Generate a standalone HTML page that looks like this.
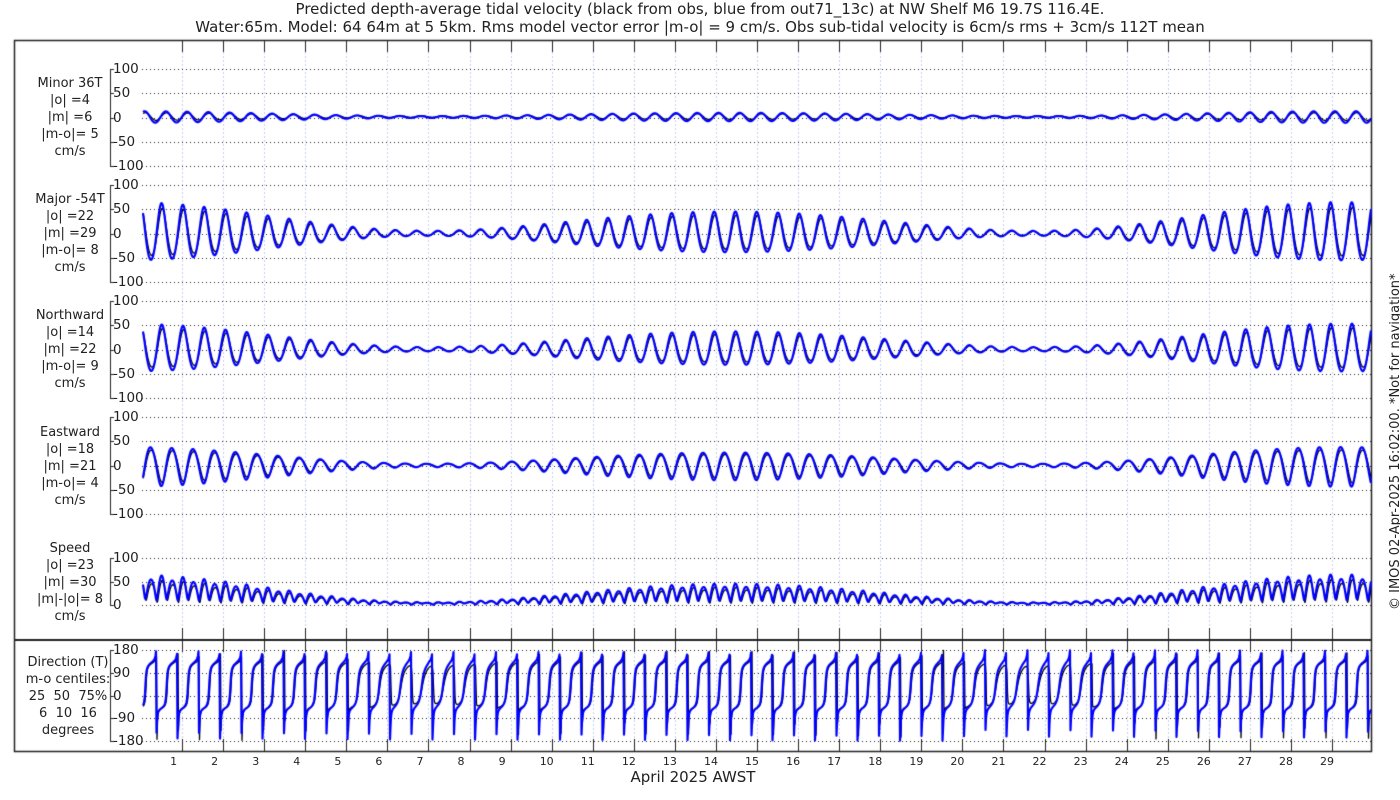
<!DOCTYPE html>
<html><head><meta charset="utf-8"><style>
html,body{margin:0;padding:0;background:#fff;width:1400px;height:800px;overflow:hidden}
#c{position:absolute;left:0;top:0}
.t{position:absolute;font-family:"DejaVu Sans","Liberation Sans",sans-serif;color:#222;white-space:nowrap}
.title{left:0;width:1400px;text-align:center;font-size:15px;line-height:18px}
.lab{width:140px;left:0;text-align:center;font-size:13px;line-height:17px}
.yl{font-size:13.5px;left:113px}
.dl{font-size:11px;top:755px}
</style></head><body>
<canvas id="c" width="1400" height="800"></canvas>
<div class="t title" style="top:0">Predicted depth-average tidal velocity (black from obs, blue from out71_13c) at NW Shelf M6 19.7S 116.4E.</div>
<div class="t title" style="top:18px">Water:65m. Model: 64 64m at 5 5km. Rms model vector error |m-o| = 9 cm/s. Obs sub-tidal velocity is 6cm/s rms + 3cm/s 112T mean</div>
<div class="t lab" style="top:75px">Minor 36T<br>|o| =4<br>|m| =6<br>|m-o|= 5<br>cm/s</div>
<div class="t lab" style="top:191px">Major -54T<br>|o| =22<br>|m| =29<br>|m-o|= 8<br>cm/s</div>
<div class="t lab" style="top:307px">Northward<br>|o| =14<br>|m| =22<br>|m-o|= 9<br>cm/s</div>
<div class="t lab" style="top:424px">Eastward<br>|o| =18<br>|m| =21<br>|m-o|= 4<br>cm/s</div>
<div class="t lab" style="top:540px">Speed<br>|o| =23<br>|m| =30<br>|m|-|o|= 8<br>cm/s</div>
<div class="t lab" style="top:654px;left:-2px">Direction (T)<br>m-o centiles:<br>25&nbsp; 50&nbsp; 75%<br>6&nbsp; 10&nbsp; 16<br>degrees</div>
<div id="yl"></div>
<div class="t" style="top:768px;left:0;width:1386px;text-align:center;font-size:15px">April 2025 AWST</div>
<div class="t" style="left:1388px;top:610px;font-size:13px;transform-origin:0 0;transform:rotate(-90deg)">© IMOS 02-Apr-2025 16:02:00. *Not for navigation*</div>
<script>
const cv=document.getElementById('c'),g=cv.getContext('2d');
const X0=141,PX=41.07,XL=143,XR=1371;
const panels=[
 {top:69,bot:166,lv:[100,50,0,-50,-100],min:-100,max:100,k:'minor'},
 {top:185,bot:282,lv:[100,50,0,-50,-100],min:-100,max:100,k:'major'},
 {top:301,bot:398,lv:[100,50,0,-50,-100],min:-100,max:100,k:'north'},
 {top:417,bot:514,lv:[100,50,0,-50,-100],min:-100,max:100,k:'east'},
 {top:558,bot:605,lv:[100,50,0],min:0,max:100,k:'speed'},
 {top:650,bot:741,lv:[180,90,0,-90,-180],min:-180,max:180,k:'dir'}];
g.strokeStyle='#222';g.lineWidth=1.5;g.strokeRect(14.5,40.5,1357,711);
g.lineWidth=2;g.beginPath();g.moveTo(14,640);g.lineTo(1371,640);g.stroke();
g.lineWidth=1;
for(let d=1;d<=29;d++){let x=Math.round(X0+PX*d)+0.5;
 g.strokeStyle='#c8d0f0';g.setLineDash([2,2]);g.beginPath();g.moveTo(x,52);g.lineTo(x,739);g.stroke();
 g.setLineDash([]);g.strokeStyle='#222';g.beginPath();
 g.moveTo(x,40);g.lineTo(x,52);g.moveTo(x,640);g.lineTo(x,652);g.moveTo(x,640);g.lineTo(x,628);g.moveTo(x,751);g.lineTo(x,739);g.stroke();}
let yl='';
panels.forEach(p=>{
 g.strokeStyle='#222';g.setLineDash([]);g.beginPath();g.moveTo(110.5,p.top);g.lineTo(110.5,p.bot);g.stroke();
 p.lv.forEach(v=>{let y=Math.round(p.top+(p.max-v)/(p.max-p.min)*(p.bot-p.top))+0.5;
  g.setLineDash([]);g.beginPath();g.moveTo(110,y);g.lineTo(114,y);g.stroke();
  g.setLineDash([1,3]);g.beginPath();g.moveTo(142,y);g.lineTo(1371,y);g.stroke();
  yl+=`<div class="t yl" style="top:${y-9}px">${v}</div>`;});
});
g.setLineDash([]);
let dl='';for(let d=1;d<=29;d++){dl+=`<div class="t dl" style="left:${X0+PX*d-12}px">${d}</div>`;}
document.getElementById('yl').innerHTML=yl+dl;
const W=2*Math.PI/0.5175,th=-54*Math.PI/180,tm=36*Math.PI/180;
function val(t,m){
 let env=(0.55+0.45*Math.cos(2*Math.PI*(t+0.4)/14.8))*(0.85+0.15*Math.cos(2*Math.PI*t/29.6));
 let ph=m?0.2:0;
 let A=(m?60:50)*env, a=(m?11:7)*env+1;
 let c=Math.cos(W*t+ph), s=Math.sin(W*t+ph+0.3);
 let maj=A*(c+0.08*Math.cos(2*(W*t+ph))), mi=a*s+(m?1:2);
 let N=maj*0.8+mi*0.3, E=-maj*0.7+mi*0.4;
 let Np=maj*Math.cos(th)+mi*Math.cos(tm), Ep=maj*Math.sin(th)+mi*Math.sin(tm);
 return {minor:mi,major:maj,north:N,east:E,speed:Math.hypot(maj,mi),dir:Math.atan2(Ep,Np)*180/Math.PI};
}
function draw(m,col,w){
 g.strokeStyle=col;g.lineWidth=w;g.lineJoin='round';
 panels.forEach(p=>{g.beginPath();let first=true;
  for(let x=XL;x<=XR;x+=0.5){let t=(x-X0)/PX;let v=val(t,m)[p.k];
   v=Math.max(p.min,Math.min(p.max,v));
   let y=p.top+(p.max-v)/(p.max-p.min)*(p.bot-p.top);
   if(first){g.moveTo(x,y);first=false;}else g.lineTo(x,y);}
  g.stroke();});
}
draw(false,'#000',1.3);draw(true,'#0000ff',2.2);
</script>
</body></html>
